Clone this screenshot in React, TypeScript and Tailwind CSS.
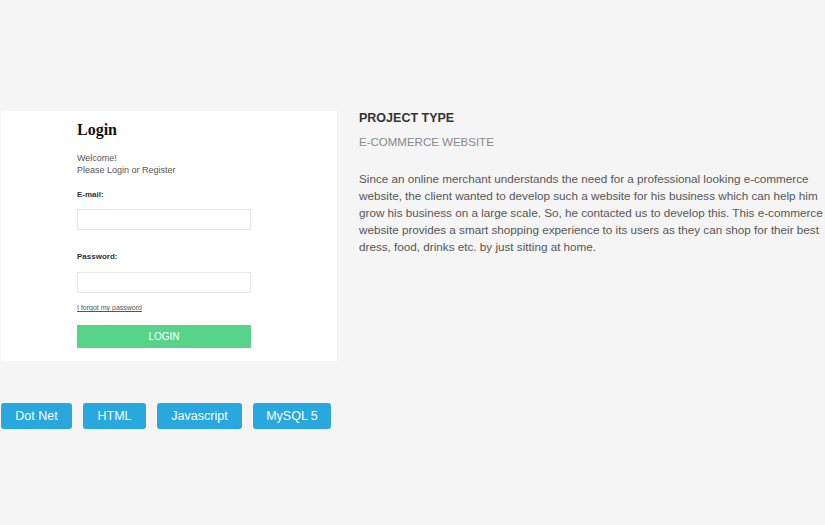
const TAGS = [
  { label: "Dot Net", width: "w-[71px]" },
  { label: "HTML", width: "w-[63px]" },
  { label: "Javascript", width: "w-[85px]" },
  { label: "MySQL 5", width: "w-[78px]" },
];

const DESCRIPTION = [
  "Since an online merchant understands the need for a professional looking e-commerce",
  "website, the client wanted to develop such a website for his business which can help him",
  "grow his business on a large scale. So, he contacted us to develop this. This e-commerce",
  "website provides a smart shopping experience to its users as they can shop for their best",
  "dress, food, drinks etc. by just sitting at home.",
];

function LoginPreview() {
  return (
    <div className="h-[250px] w-[336px] shrink-0 bg-white pl-[76px] pt-[9px] font-['Liberation_Sans',sans-serif]">
      <h2 className="font-['Liberation_Serif',serif] text-[16px] font-bold leading-[20px] text-[#111]">Login</h2>
      <p className="mt-[12px] text-[9px] leading-[12px] text-[#555]">
        Welcome!
        <br />
        Please Login or Register
      </p>
      <p className="mt-[14px] text-[8px] font-bold leading-[10px] text-[#333]">E-mail:</p>
      <div className="mt-[9px] h-[21px] w-[174px] border border-[#e6e6e6] bg-white" />
      <p className="mt-[22px] text-[8px] font-bold leading-[10px] text-[#333]">Password:</p>
      <div className="mt-[10px] h-[21px] w-[174px] border border-[#e6e6e6] bg-white" />
      <p className="mt-[10px] text-[7px] leading-[10px] text-[#555] underline">I forgot my password</p>
      <div className="mt-[12px] flex h-[23px] w-[174px] items-center justify-center bg-[#58d48a] text-[10px] text-white">
        LOGIN
      </div>
    </div>
  );
}

export default function App() {
  return (
    <div className="min-h-[525px] w-full bg-[#f5f5f5] pl-px pt-[111px]">
      <div className="flex gap-[22px]">
        <LoginPreview />
        <div className="font-['Liberation_Sans',sans-serif]">
          <h3 className="text-[12.5px] font-bold uppercase leading-[14px] text-[#333]">Project Type</h3>
          <p className="mt-[10px] text-[11.5px] leading-[14px] text-[#888]">E-COMMERCE WEBSITE</p>
          <p className="mt-[21px] text-[11.7px] leading-[17px] text-[#555]">
            {DESCRIPTION.map((line) => (
              <span key={line} className="block whitespace-nowrap">
                {line}
              </span>
            ))}
          </p>
        </div>
      </div>
      <div className="mt-[42px] flex gap-[11px]">
        {TAGS.map((tag) => (
          <span
            key={tag.label}
            className={`flex h-[26px] items-center justify-center rounded-[3px] bg-[#29a7df] font-['Liberation_Sans',sans-serif] text-[12.5px] text-white ${tag.width}`}
          >
            {tag.label}
          </span>
        ))}
      </div>
    </div>
  );
}
